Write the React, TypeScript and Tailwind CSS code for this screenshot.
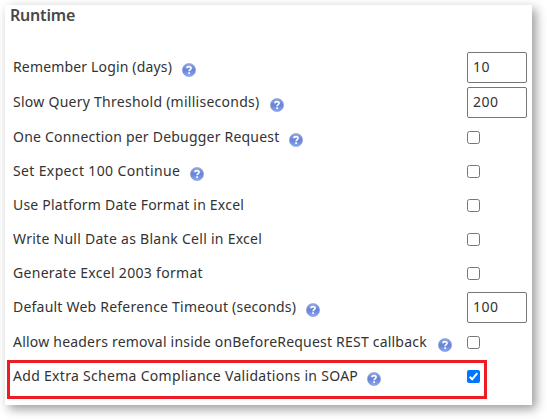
type Row = {
  label: string;
  labelWidth: string;
  spacing: string;
  height: string;
  help?: boolean;
  value?: string;
  checked?: boolean;
};

const rows: Row[] = [
  { label: "Remember Login (days)", labelWidth: "w-[169px]", spacing: "tracking-[0.16px]", height: "h-[35px]", help: true, value: "10" },
  { label: "Slow Query Threshold (milliseconds)", labelWidth: "w-[257px]", spacing: "tracking-[0.26px]", height: "h-[35px]", help: true, value: "200" },
  { label: "One Connection per Debugger Request", labelWidth: "w-[276px]", spacing: "tracking-[0.21px]", height: "h-[34px]", help: true },
  { label: "Set Expect 100 Continue", labelWidth: "w-[177px]", spacing: "tracking-[0.36px]", height: "h-[34px]", help: true },
  { label: "Use Platform Date Format in Excel", labelWidth: "w-[240px]", spacing: "tracking-[0.21px]", height: "h-[34px]" },
  { label: "Write Null Date as Blank Cell in Excel", labelWidth: "w-[260px]", spacing: "tracking-[0.27px]", height: "h-[34px]" },
  { label: "Generate Excel 2003 format", labelWidth: "w-[200px]", spacing: "tracking-[0.3px]", height: "h-[34px]" },
  { label: "Default Web Reference Timeout (seconds)", labelWidth: "w-[293px]", spacing: "tracking-[0.22px]", height: "h-[35px]", help: true, value: "100" },
  { label: "Allow headers removal inside onBeforeRequest REST callback", labelWidth: "w-[425px]", spacing: "tracking-[0.21px]", height: "h-[34px]", help: true },
  { label: "Add Extra Schema Compliance Validations in SOAP", labelWidth: "w-[354px]", spacing: "tracking-[0.3px]", height: "h-[34px]", help: true, checked: true },
];

function HelpIcon() {
  return (
    <svg className="mt-[6px] size-[14px] shrink-0" viewBox="0 0 14 14">
      <defs>
        <linearGradient id="help-fill" x1="0" y1="0" x2="0" y2="1">
          <stop offset="0" stopColor="#94a8e2" />
          <stop offset="0.5" stopColor="#6682d8" />
          <stop offset="1" stopColor="#8aa8f8" />
        </linearGradient>
      </defs>
      <circle cx="7" cy="7" r="6.6" fill="url(#help-fill)" stroke="#8c9dd8" strokeWidth="0.6" />
      <path d="M4.9 5.3C5 3.1 9.1 3.1 9.1 5.2C9.1 6.6 7.1 6.6 7.1 8.3" fill="none" stroke="#fff" strokeWidth="1.6" />
      <path d="M6.2 9.3H8V11H6.2Z" fill="#fff" />
    </svg>
  );
}

function CheckBox({ checked }: { checked?: boolean }) {
  if (!checked) {
    return <span className="mt-[11px] size-[13px] rounded-[2.5px] border border-[#767676] bg-white" />;
  }
  return (
    <span className="mt-[11px] flex size-[13px] items-center justify-center rounded-[2px] bg-[#0075ff]">
      <svg className="size-[13px]" viewBox="0 0 13 13">
        <path d="M2.7 6.7L5.2 9.2L10.3 3.1" fill="none" stroke="#fff" strokeWidth="2" />
      </svg>
    </span>
  );
}

export default function App() {
  return (
    <main className="h-[420px] w-[547px] overflow-hidden bg-white pt-[5px] pl-[5px] font-['Noto_Sans',sans-serif] text-[#333]">
      <section className="relative h-[400px] w-[527px] bg-white shadow-[4px_4px_10px_rgba(0,0,0,0.4)]">
        <h1 className="h-[45px] pl-[5px] text-[16px] leading-[21px] font-semibold tracking-[-0.2px] text-[#484848]">Runtime</h1>
        {rows.map((row) => (
          <div key={row.label} className={`flex items-start pl-2 ${row.height}`}>
            <div className="flex w-[454px] items-start pt-[7px]">
              <span className={`shrink-0 text-[14px] leading-5 whitespace-nowrap ${row.labelWidth} ${row.spacing}`}>
                {row.label}
              </span>
              {row.help && <HelpIcon />}
            </div>
            {row.value ? (
              <span className="mt-[2px] h-[31px] w-[60px] rounded-[2px] border border-[#767676] pt-1 pl-[5px] text-[14px] leading-5 tracking-[0.5px]">
                {row.value}
              </span>
            ) : (
              <CheckBox checked={row.checked} />
            )}
          </div>
        ))}
        <div className="pointer-events-none absolute top-[355px] left-[2px] h-[39px] w-[480px] border-[3px] border-[#ed1c24]" />
      </section>
    </main>
  );
}
